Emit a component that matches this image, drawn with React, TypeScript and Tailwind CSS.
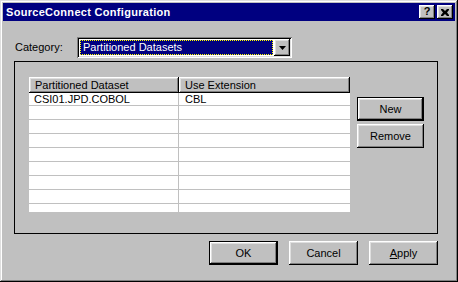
import React from "react";

const raised =
  "shadow-[inset_-1px_-1px_#000,inset_1px_1px_#fff,inset_-2px_-2px_#808080,inset_2px_2px_#dfdfdf]";

function Btn({
  children,
  def,
  className = "",
}: {
  children: React.ReactNode;
  def?: boolean;
  className?: string;
}) {
  if (def) {
    return (
      <div className={`border border-black ${className}`}>
        <div
          className={`w-full h-full bg-[#c0c0c0] ${raised} flex items-center justify-center text-black`}
        >
          {children}
        </div>
      </div>
    );
  }
  return (
    <div
      className={`bg-[#c0c0c0] ${raised} flex items-center justify-center text-black ${className}`}
    >
      {children}
    </div>
  );
}

export default function App() {
  const rows = [
    ["CSI01.JPD.COBOL", "CBL"],
    ["", ""],
    ["", ""],
    ["", ""],
    ["", ""],
    ["", ""],
    ["", ""],
    ["", ""],
    ["", ""],
  ];
  return (
    <div
      className="w-[458px] h-[282px] bg-[#c0c0c0] p-[3px] flex flex-col shadow-[inset_-1px_-1px_#000,inset_1px_1px_#dfdfdf,inset_-2px_-2px_#808080,inset_2px_2px_#fff] text-[11px] leading-none text-black"
      style={{ fontFamily: '"Liberation Sans", Arial, sans-serif' }}
    >
      {/* Title bar */}
      <div className="h-[18px] bg-[#000080] flex items-center pl-[3px] pr-[2px]">
        <span className="text-white font-bold text-[11px] tracking-[0.3px]">
          SourceConnect Configuration
        </span>
        <div className="ml-auto flex gap-[2px]">
          <div
            className={`w-[16px] h-[14px] bg-[#c0c0c0] ${raised} flex items-center justify-center font-bold text-[11px] pb-[1px]`}
          >
            ?
          </div>
          <div
            className={`w-[16px] h-[14px] bg-[#c0c0c0] ${raised} flex items-center justify-center`}
          >
            <svg width="8" height="7" viewBox="0 0 8 7">
              <path d="M0 0h2l2 2 2-2h2v1L6 3.5 8 6v1H6L4 5 2 7H0V6l2-2.5L0 1z" fill="#000" />
            </svg>
          </div>
        </div>
      </div>

      {/* Category row */}
      <div className="mt-[16px] h-[21px] flex items-center">
        <span className="ml-[12px] w-[62px]">Category:</span>
        <div className="w-[215px] h-[21px] shadow-[inset_1px_1px_#808080,inset_-1px_-1px_#fff,inset_2px_2px_#000,inset_-2px_-2px_#dfdfdf] p-[2px] flex">
          <div className="flex-1 bg-white p-[1px] flex">
            <div className="flex-1 bg-[#000080] border border-dotted border-[#ffff00] flex items-center pl-[2px] text-white">
              Partitioned Datasets
            </div>
          </div>
          <div
            className={`w-[16px] h-[17px] bg-[#c0c0c0] ${raised} flex items-center justify-center`}
          >
            <svg width="7" height="4" viewBox="0 0 7 4">
              <path d="M0 0h7L3.5 4z" fill="#000" />
            </svg>
          </div>
        </div>
      </div>

      {/* Group box */}
      <div className="mt-[3px] ml-[11px] w-[424px] h-[173px] border border-black flex pt-[15px] pl-[14px]">
        <div className="w-[321px] h-[135px] bg-white flex flex-col">
          <div className="h-[16px] flex">
            <div
              className={`w-[150px] h-full bg-[#c0c0c0] ${raised} flex items-center pl-[6px]`}
            >
              Partitioned Dataset
            </div>
            <div
              className={`w-[171px] h-full bg-[#c0c0c0] ${raised} flex items-center pl-[6px]`}
            >
              Use Extension
            </div>
          </div>
          <div className="h-[119px] overflow-hidden flex flex-col">
            {rows.map((r, i) => (
              <div
                key={i}
                className={`${i === 0 ? "h-[13px]" : "h-[14px]"} shrink-0 flex border-b border-[#c0c0c0]`}
              >
                <div className="w-[150px] border-r border-[#c0c0c0] pl-[5px] flex items-center">
                  {r[0]}
                </div>
                <div className="flex-1 pl-[6px] flex items-center">{r[1]}</div>
              </div>
            ))}
          </div>
        </div>
        <div className="ml-[7px] mt-[20px] flex flex-col gap-[3px]">
          <Btn def className="w-[67px] h-[24px]">
            New
          </Btn>
          <Btn className="w-[67px] h-[24px]">Remove</Btn>
        </div>
      </div>

      {/* Bottom buttons */}
      <div className="mt-[7px] flex pl-[206px] gap-[11px]">
        <Btn def className="w-[69px] h-[24px]">
          OK
        </Btn>
        <Btn className="w-[69px] h-[24px]">Cancel</Btn>
        <Btn className="w-[69px] h-[24px]">
          <span>
            <span className="underline">A</span>pply
          </span>
        </Btn>
      </div>
    </div>
  );
}
